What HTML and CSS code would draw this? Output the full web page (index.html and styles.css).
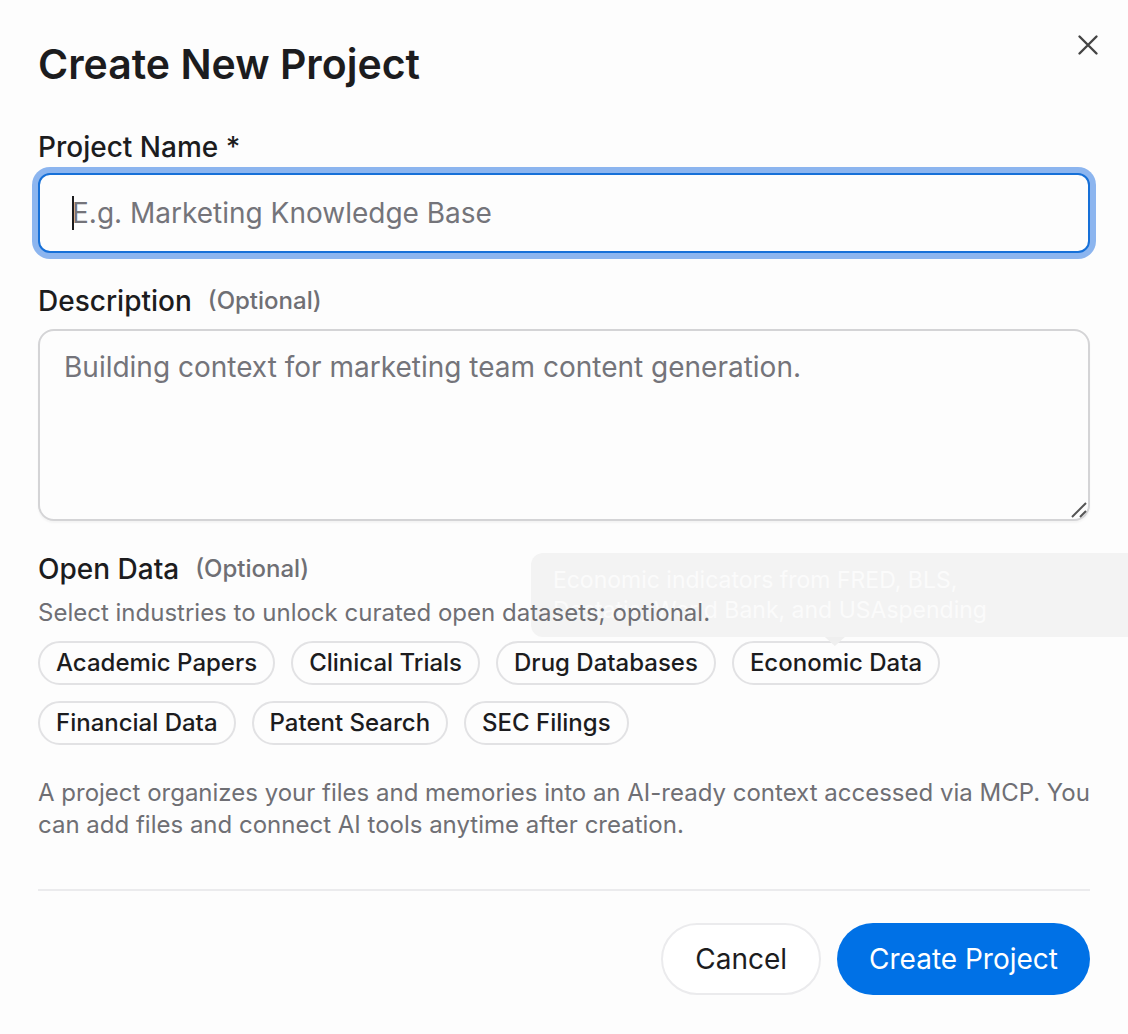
FILE: index.html
```html
<!DOCTYPE html>
<html lang="en">
<head>
<meta charset="utf-8">
<meta name="viewport" content="width=device-width, initial-scale=1">
<title>Create New Project</title>
<link rel="stylesheet" href="styles.css">
</head>
<body>
<main class="dialog" role="dialog" aria-labelledby="dialog-title">
  <button class="close" type="button" aria-label="Close">
    <svg viewBox="0 0 20 20" width="20" height="20" aria-hidden="true"><path d="M1.500 1.500l17 17M18.500 1.500l-17 17"/></svg>
  </button>
  <h1 class="title" id="dialog-title">Create New Project</h1>
  <form class="form">
    <div class="field name-field">
      <label class="label" for="name">Project Name *</label>
      <div class="input-wrap">
        <input class="input" id="name" type="text" placeholder="E.g. Marketing Knowledge Base">
        <span class="caret"></span>
      </div>
    </div>
    <div class="field description-field">
      <label class="label" for="description">Description <span class="optional">(Optional)</span></label>
      <div class="area-wrap">
        <textarea class="area" id="description" placeholder="Building context for marketing team content generation."></textarea>
        <svg class="grip" viewBox="0 0 16 16" width="16" height="16" aria-hidden="true"><path d="M1 15L15 1M9 15l6-6"/></svg>
      </div>
    </div>
    <section class="data">
      <h2 class="label">Open Data <span class="optional">(Optional)</span></h2>
      <p class="hint">Select industries to unlock curated open datasets; optional.</p>
      <div class="chips">
        <button class="chip" type="button">Academic Papers</button>
        <button class="chip" type="button">Clinical Trials</button>
        <button class="chip" type="button">Drug Databases</button>
        <span class="chip-anchor">
          <button class="chip" type="button">Economic Data</button>
          <span class="tooltip" role="tooltip">Economic indicators from FRED, BLS,<br>Destatis, World Bank, and USAspending</span>
        </span>
        <button class="chip" type="button">Financial Data</button>
        <button class="chip" type="button">Patent Search</button>
        <button class="chip" type="button">SEC Filings</button>
      </div>
    </section>
    <p class="about">A project organizes your files and memories into an AI-ready context accessed via MCP. You can add files and connect AI tools anytime after creation.</p>
    <footer class="actions">
      <button class="button" type="button">Cancel</button>
      <button class="button primary" type="submit">Create Project</button>
    </footer>
  </form>
</main>
</body>
</html>
```
FILE: styles.css
```css
* { box-sizing: border-box; }
body { margin: 0; background: #fdfdfd; color: #1c1c1e; font-family: Inter, sans-serif; overflow-x: hidden; }
button, input, textarea { font: inherit; color: inherit; }
.dialog { position: relative; padding: 38px; overflow: hidden; }
.close { position: absolute; top: 29px; right: 24px; display: flex; width: 32px; height: 32px; padding: 0; align-items: center; justify-content: center; border: 0; background: none; }
.close svg { fill: none; stroke: #444; stroke-width: 2.4; stroke-linecap: round; overflow: visible; }
.title { margin: 0; font-size: 41px; line-height: 52px; font-weight: 600; }
.form { display: flex; flex-direction: column; margin-top: 40px; }
.label { display: flex; align-items: center; gap: 16px; margin: 0; font-size: 28px; line-height: 34px; font-weight: 500; }
.optional { font-size: 24px; color: #6f6f74; }
.input-wrap, .area-wrap { position: relative; display: flex; }
.input-wrap { margin-top: 9px; }
.input { width: 100%; height: 80px; padding: 0 32px; border: 2px solid #1670d8; border-radius: 12px; outline: 0; background: #fdfdfd; box-shadow: 0 0 0 6px #8cb5ef; font-size: 28px; }
.input::placeholder, .area::placeholder { color: #74747a; opacity: 1; }
.caret { position: absolute; left: 34px; top: 23px; width: 2px; height: 34px; background: #1c1c1e; }
.description-field { margin-top: 31px; }
.area-wrap { margin-top: 11px; }
.area { width: 100%; height: 192px; padding: 18px 24px; border: 2px solid #d4d4d6; border-radius: 16px; background: #fdfdfd; resize: none; font-size: 28px; line-height: 36px; box-shadow: 0 2px 2px #0000000a; }
.grip { position: absolute; right: 3px; bottom: 3px; fill: none; stroke: #555; stroke-width: 2; }
.data { margin-top: 31px; }
.hint { position: relative; z-index: 1; margin: 11px 0 12px; font-size: 24px; line-height: 32px; color: #6f6f74; }
.chips { display: flex; flex-wrap: wrap; gap: 16px; }
.chip { height: 44px; padding: 0 16px; border: 2px solid #e2e2e4; border-radius: 22px; background: #fdfdfd; font-size: 24px; font-weight: 500; line-height: 32px; white-space: nowrap; }
.chip-anchor { position: relative; display: flex; }
.tooltip { position: absolute; left: -201px; bottom: 48px; width: 610px; padding: 12px 22px; border-radius: 12px; background: #f3f3f3; color: #fbfbfb; font-size: 23px; line-height: 30px; pointer-events: none; }
.tooltip::after { content: ""; position: absolute; left: 294px; top: 100%; width: 20px; height: 9px; background: #efefef; clip-path: polygon(0 0, 100% 0, 50% 100%); }
.about { margin: 32px 0 48px; font-size: 24px; line-height: 32px; color: #6f6f74; }
.actions { display: flex; justify-content: flex-end; gap: 16px; padding-top: 32px; border-top: 2px solid #ebebed; }
.button { height: 72px; padding: 0 32px; border: 2px solid #ebebed; border-radius: 36px; background: #fff; font-size: 28px; }
.primary { border: 0; background: #0071e6; color: #fff; }
```
